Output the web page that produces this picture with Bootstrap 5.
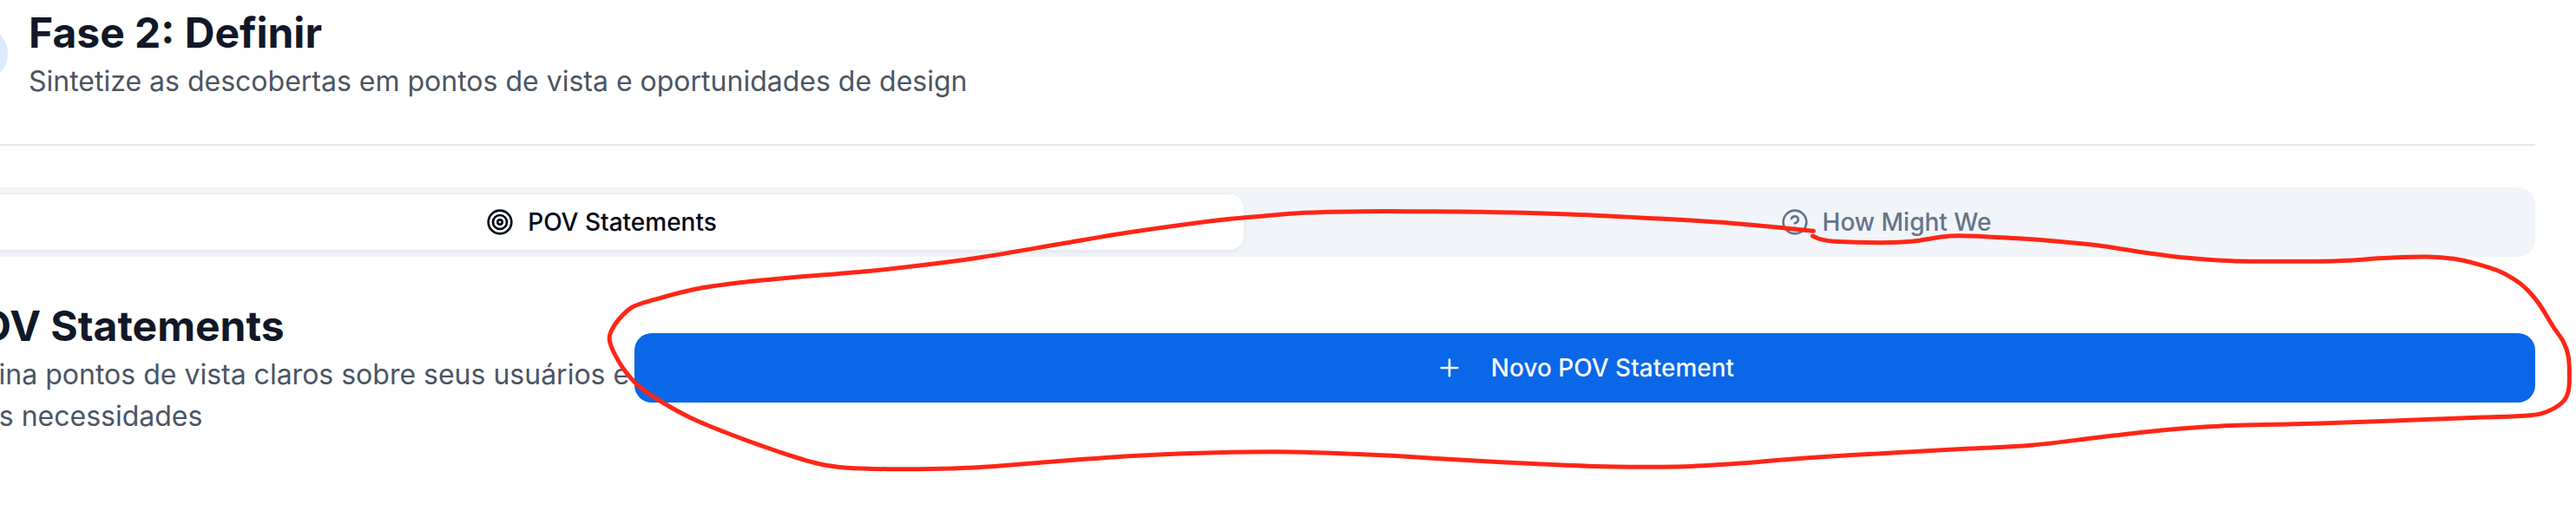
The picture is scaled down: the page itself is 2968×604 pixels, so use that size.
<!DOCTYPE html>
<html lang="pt-BR">
<head>
<meta charset="utf-8">
<title>Fase 2: Definir</title>
<link href="https://cdn.jsdelivr.net/npm/bootstrap@5.3.0/dist/css/bootstrap.min.css" rel="stylesheet">
<style>
body{font-family:Inter,sans-serif;font-size:32px;line-height:48px;color:#4b5563;background:#fff;height:604px;overflow:hidden}
.page{width:2976px;margin-left:-55px;padding-top:6px;height:604px}
.phase-head{padding-bottom:48px;border-bottom:2px solid #e5e7eb;gap:24px}
.phase-dot{width:64px;height:64px;background:#dbeafe}
.heading{font-size:48px;line-height:64px;font-weight:700;color:#111827}
.tabs-bar{height:80px;margin:48px 0;padding:8px;background:#f1f5f9;border-radius:20px}
.tabs-bar .tab{font-size:28px;line-height:40px;font-weight:500;color:#64748b;gap:16px;border:0;background:none;border-radius:16px}
.tabs-bar .tab.active{background:#fff;color:#020817;box-shadow:0 2px 6px rgba(0,0,0,.07)}
.intro{width:786px}
.btn-new{height:80px;font-size:28px;line-height:40px;font-weight:500;gap:32px;border:0;border-radius:20px;--bs-btn-bg:#0967e8;--bs-btn-color:#f8fafc}
.ico{width:32px;height:32px;fill:none;stroke:currentColor;stroke-width:2;stroke-linecap:round;stroke-linejoin:round;flex:none}
.ink{left:0;top:0;pointer-events:none}
</style>
</head>
<body class="position-relative">
<main class="page">
  <header class="phase-head d-flex align-items-center">
    <div class="phase-dot rounded-circle"></div>
    <div>
      <h2 class="heading m-0">Fase 2: Definir</h2>
      <p class="m-0">Sintetize as descobertas em pontos de vista e oportunidades de design</p>
    </div>
  </header>
  <div class="tabs-bar d-flex" role="tablist">
    <button class="tab active col-6 d-flex align-items-center justify-content-center p-0" role="tab">
      <svg class="ico" viewBox="0 0 24 24"><circle cx="12" cy="12" r="10"/><circle cx="12" cy="12" r="6"/><circle cx="12" cy="12" r="2"/></svg>
      <span>POV Statements</span>
    </button>
    <button class="tab col-6 d-flex align-items-center justify-content-center p-0" role="tab">
      <svg class="ico" viewBox="0 0 24 24"><circle cx="12" cy="12" r="10"/><path d="M9.09 9a3 3 0 0 1 5.83 1c0 2-3 3-3 3"/><path d="M12 17h.01"/></svg>
      <span>How Might We</span>
    </button>
  </div>
  <section class="d-flex align-items-center">
    <div class="intro flex-shrink-0">
      <h3 class="heading m-0">POV Statements</h3>
      <p class="m-0">Defina pontos de vista claros sobre seus usuários e suas necessidades</p>
    </div>
    <button class="btn btn-primary btn-new flex-grow-1 d-flex align-items-center justify-content-center">
      <svg class="ico" viewBox="0 0 24 24"><path d="M5 12h14M12 5v14"/></svg>
      <span>Novo POV Statement</span>
    </button>
  </section>
</main>
<svg class="ink position-absolute" width="2968" height="604" viewBox="0 0 2968 604" fill="none" stroke="#ff2616" stroke-width="5" stroke-linecap="round" stroke-linejoin="round"><path id="stroke"/></svg>
<script src="https://cdn.jsdelivr.net/npm/bootstrap@5.3.0/dist/js/bootstrap.bundle.min.js"></script>
<script>
// Pen samples, joined by a Catmull-Rom curve
const p = [[2089.5,266.2],[2000,257.7],[1910,252],[1808,247],[1706,244.2],[1637,243.7],[1568,243.7],[1502,245.3],[1456,249],[1400,254.3],[1300,268],[1228,280],[1131,296.5],[1068,305],[995,313],[908,320.3],[850,326],[801,333.3],[753,345.7],[728.5,354],[713,368],[704,382],[702.3,392],[706.7,405],[719,426],[736,445],[762,463],[796,481.7],[840,500],[898,521],[942,534.3],[976,539.3],[1029,540.7],[1097,540],[1155,536.7],[1252,529],[1330,524.3],[1400,521.7],[1471,520.7],[1527,522],[1604,525.3],[1686,530.3],[1772,534.7],[1849,537.7],[1931,538],[1987,535.3],[2063,529.3],[2130,524.7],[2180,522],[2270,517],[2340,513.3],[2413,504.7],[2483,496.7],[2540,492],[2598,489.7],[2674,488],[2789,483.7],[2860,481],[2915,478.7],[2934,474.7],[2952,464],[2959,451.7],[2960.4,430],[2959,410],[2953.5,394],[2942,377],[2926,351],[2916,338.5],[2904,327],[2881,313.3],[2854,304.3],[2827,298.3],[2797,296],[2751,297.3],[2693,300.7],[2636,301.3],[2571,300.7],[2521,297.3],[2475,291.7],[2418,283],[2368,278],[2333,275.3],[2287,272.7],[2247,272],[2203,278.3],[2167,279.7],[2113,278.3],[2097,275.7],[2088.5,272]];
let d = 'M' + p[0];
for (let i = 0; i < p.length - 1; i++) {
  const a = p[i-1] || p[i], b = p[i], c = p[i+1], e = p[i+2] || c;
  const l = Math.hypot(c[0]-b[0], c[1]-b[1]);
  const k1 = l / (l + Math.hypot(b[0]-a[0], b[1]-a[1])) / 3;
  const k2 = l / (l + Math.hypot(e[0]-c[0], e[1]-c[1])) / 3;
  d += `C${b[0]+(c[0]-a[0])*k1} ${b[1]+(c[1]-a[1])*k1} ${c[0]-(e[0]-b[0])*k2} ${c[1]-(e[1]-b[1])*k2} ${c}`;
}
document.getElementById('stroke').setAttribute('d', d);
</script>
</body>
</html>
